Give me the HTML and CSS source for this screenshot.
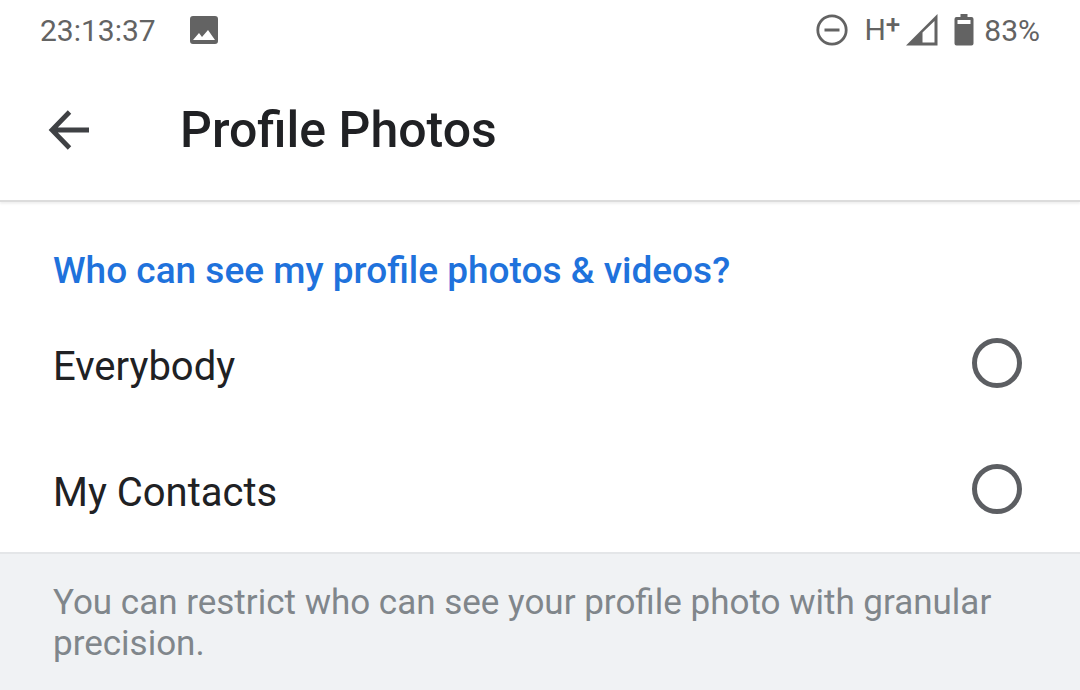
FILE: index.html
```html
<!DOCTYPE html>
<html lang="en">
<head>
<meta charset="utf-8">
<meta name="viewport" content="width=device-width, initial-scale=1">
<title>Profile Photos</title>
<link rel="stylesheet" href="styles.css">
</head>
<body>
<div class="status-bar">
  <span class="clock">23:13:37</span>
  <svg class="icon-image" viewBox="0 0 30 30" aria-hidden="true"><path fill="#636363" fill-rule="evenodd" d="M4 1H26Q29 1 29 4V26Q29 29 26 29H4Q1 29 1 26V4Q1 1 4 1ZM4 25H26L19 15L13 22L10 18Z"/></svg>
  <div class="status-right">
    <svg class="icon-dnd" viewBox="0 0 32 32" aria-hidden="true"><circle cx="16" cy="16" r="14.2" fill="none" stroke="#636363" stroke-width="2.8"/><path d="M8.500 16H23.500" stroke="#636363" stroke-width="3"/></svg>
    <span class="network">H<span class="plus">+</span></span>
    <svg class="icon-signal" viewBox="0 0 32 32" aria-hidden="true"><path fill="#636363" fill-rule="evenodd" d="M0 31.500L31.500 0V31.500ZM16.500 18.500V28.500H28.500V7Z"/></svg>
    <svg class="icon-battery" viewBox="0 0 20 32" aria-hidden="true"><path fill="#636363" fill-rule="evenodd" d="M6.500 0H13.500V3H17.500Q19.500 3 19.500 5V29.500Q19.500 31.500 17.500 31.500H2.500Q.5 31.500 .5 29.500V5Q.5 3 2.500 3H6.500ZM3.500 6V10H16.500V6Z"/></svg>
    <span class="percent">83%</span>
  </div>
</div>
<header class="app-bar">
  <button class="back" type="button" aria-label="Back"><svg class="icon-back" viewBox="0 0 42 40" aria-hidden="true"><path d="M41 20H5M21.500 2L4 20L21.500 38" fill="none" stroke="#3f4144" stroke-width="4.800"/></svg></button>
  <h1 class="title">Profile Photos</h1>
</header>
<main>
  <fieldset class="options">
    <legend class="question">Who can see my profile photos &amp; videos?</legend>
    <label class="option" for="everybody"><span class="option-name">Everybody</span><input class="radio" type="radio" name="audience" id="everybody"></label>
    <label class="option" for="contacts"><span class="option-name">My Contacts</span><input class="radio" type="radio" name="audience" id="contacts"></label>
  </fieldset>
  <p class="note">You can restrict who can see your profile photo with granular precision.</p>
</main>
</body>
</html>
```
FILE: styles.css
```css
* { box-sizing: border-box; }
body {
  margin: 0;
  min-height: 100vh;
  display: flex;
  flex-direction: column;
  background: #fff;
  color: #202124;
  font-family: Roboto, "Liberation Sans", sans-serif;
}
.status-bar {
  display: flex;
  align-items: center;
  height: 60px;
  padding: 0 40px;
  color: #636363;
  font-size: 30px;
}
.icon-image { width: 30px; height: 30px; margin-left: 33px; }
.status-right { display: flex; align-items: center; margin-left: auto; }
.icon-dnd { width: 32px; height: 32px; }
.network { display: flex; margin-left: 16px; font-size: 30px; line-height: 34px; }
.plus { font-size: 26px; font-weight: 500; line-height: 22px; }
.icon-signal { width: 32px; height: 32px; margin-left: 6px; }
.icon-battery { width: 20px; height: 32px; margin-left: 16px; }
.percent { margin-left: 10px; }
.app-bar {
  display: flex;
  align-items: center;
  gap: 90px;
  height: 142px;
  padding: 0 48px;
  border-bottom: 2px solid #dcdcdc;
  box-shadow: 0 2px 2px rgba(0, 0, 0, 0.06);
}
.back { display: flex; padding: 0; border: 0; background: none; }
.icon-back { width: 42px; height: 40px; }
.title { margin: 0; font-size: 50px; font-weight: 500; line-height: 60px; }
main { display: flex; flex: 1; flex-direction: column; }
.options { margin: 0; padding: 0; border: 0; min-width: 0; }
.question {
  padding: 44px 53px 4px;
  color: #1f72dc;
  font-size: 37px;
  font-weight: 500;
  line-height: 50px;
}
.option {
  display: flex;
  align-items: center;
  justify-content: space-between;
  height: 126px;
  padding: 0 58px 0 53px;
  font-size: 40px;
}
.option-name { padding-top: 6px; }
.radio {
  width: 50px;
  height: 50px;
  margin: 0;
  appearance: none;
  border: 5px solid #5c5e62;
  border-radius: 50%;
}
.radio:checked { border-color: #1a73e8; background: radial-gradient(#1a73e8 45%, transparent 50%); }
.note {
  flex: 1;
  margin: 0;
  padding: 28px 53px;
  border-top: 2px solid #e4e6e8;
  background: #f0f2f4;
  color: #80868b;
  font-size: 35px;
  line-height: 41px;
}
```
